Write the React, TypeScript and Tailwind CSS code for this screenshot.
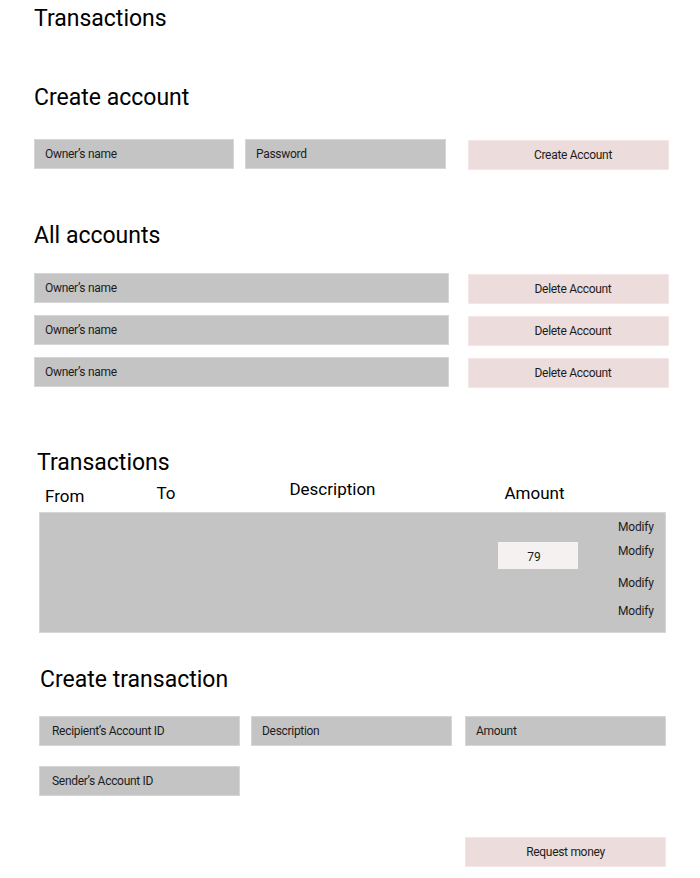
const field = 'h-[30px] bg-[#c4c4c4] border border-[#d6d6d6] flex items-center pl-[10px] text-[12px] tracking-[-0.3px] text-[#1c1c1c]';
const pinkBtn = 'h-[30px] w-[201px] bg-[#ecdcdc] border border-[#f3e6e6] flex items-center justify-center text-[12px] tracking-[-0.3px] text-[#1c1c1c]';

export default function App() {
  const accounts = ['Owner’s name', 'Owner’s name', 'Owner’s name'];

  return (
    <div className="w-[700px] h-[878px] bg-white text-black font-['Roboto',sans-serif] overflow-hidden">
      <h1 className="pl-[34px] pt-[6px] text-[23px] leading-[26px]">Transactions</h1>

      {/* Create account */}
      <h2 className="pl-[34px] mt-[53px] text-[23px] leading-[26px]">Create account</h2>
      <div className="flex items-start pl-[34px] mt-[28px]">
        <div className={`${field} w-[200px]`}>Owner’s name</div>
        <div className={`${field} w-[201px] ml-[11px]`}>Password</div>
        <button className={`${pinkBtn} ml-[22px] mt-[1px] pl-[9px]`}>Create Account</button>
      </div>

      {/* All accounts */}
      <h2 className="pl-[34px] mt-[53px] text-[23px] leading-[26px]">All accounts</h2>
      <div className="flex flex-col gap-[11px] pl-[34px] mt-[24px]">
        {accounts.map((name, i) => (
          <div key={i} className="flex items-start">
            <div className={`${field} w-[415px]`}>{name}</div>
            <button className={`${pinkBtn} ml-[19px] mt-[1px] pl-[9px]`}>Delete Account</button>
          </div>
        ))}
      </div>

      {/* Transactions table */}
      <h2 className="pl-[37px] mt-[62px] text-[23px] leading-[26px]">Transactions</h2>
      <div className="flex items-start h-[32px] mt-[4px] text-[17px] leading-[19px]">
        <span className="ml-[45px] mt-[7px]">From</span>
        <span className="ml-[72px] mt-[4px]">To</span>
        <span className="ml-[114px]">Description</span>
        <span className="ml-[129px] mt-[4px]">Amount</span>
      </div>
      <div className="ml-[39px] w-[627px] h-[121px] bg-[#c4c4c4] border border-[#d6d6d6] flex items-start">
        <div className="ml-[458px] mt-[29px] w-[80px] h-[27px] bg-[#f6f1f1] flex items-center justify-center text-[12px] text-[#1c1c1c] pt-[3px] pr-[8px]">
          79
        </div>
        <div className="ml-[40px] mt-[7px] flex flex-col text-[12px] tracking-[-0.2px] leading-[14px] text-[#1c1c1c]">
          <span>Modify</span>
          <span className="mt-[10px]">Modify</span>
          <span className="mt-[18px]">Modify</span>
          <span className="mt-[14px]">Modify</span>
        </div>
      </div>

      {/* Create transaction */}
      <h2 className="pl-[40px] mt-[34px] text-[23px] leading-[26px]">Create transaction</h2>
      <div className="flex items-start pl-[39px] mt-[23px]">
        <div className={`${field} w-[201px] pl-[12px]`}>Recipient’s Account ID</div>
        <div className={`${field} w-[201px] ml-[11px]`}>Description</div>
        <div className={`${field} w-[201px] ml-[13px]`}>Amount</div>
      </div>
      <div className="pl-[39px] mt-[20px]">
        <div className={`${field} w-[201px] pl-[12px]`}>Sender’s Account ID</div>
      </div>
      <div className="pl-[465px] mt-[41px]">
        <button className={pinkBtn}>Request money</button>
      </div>
    </div>
  );
}
